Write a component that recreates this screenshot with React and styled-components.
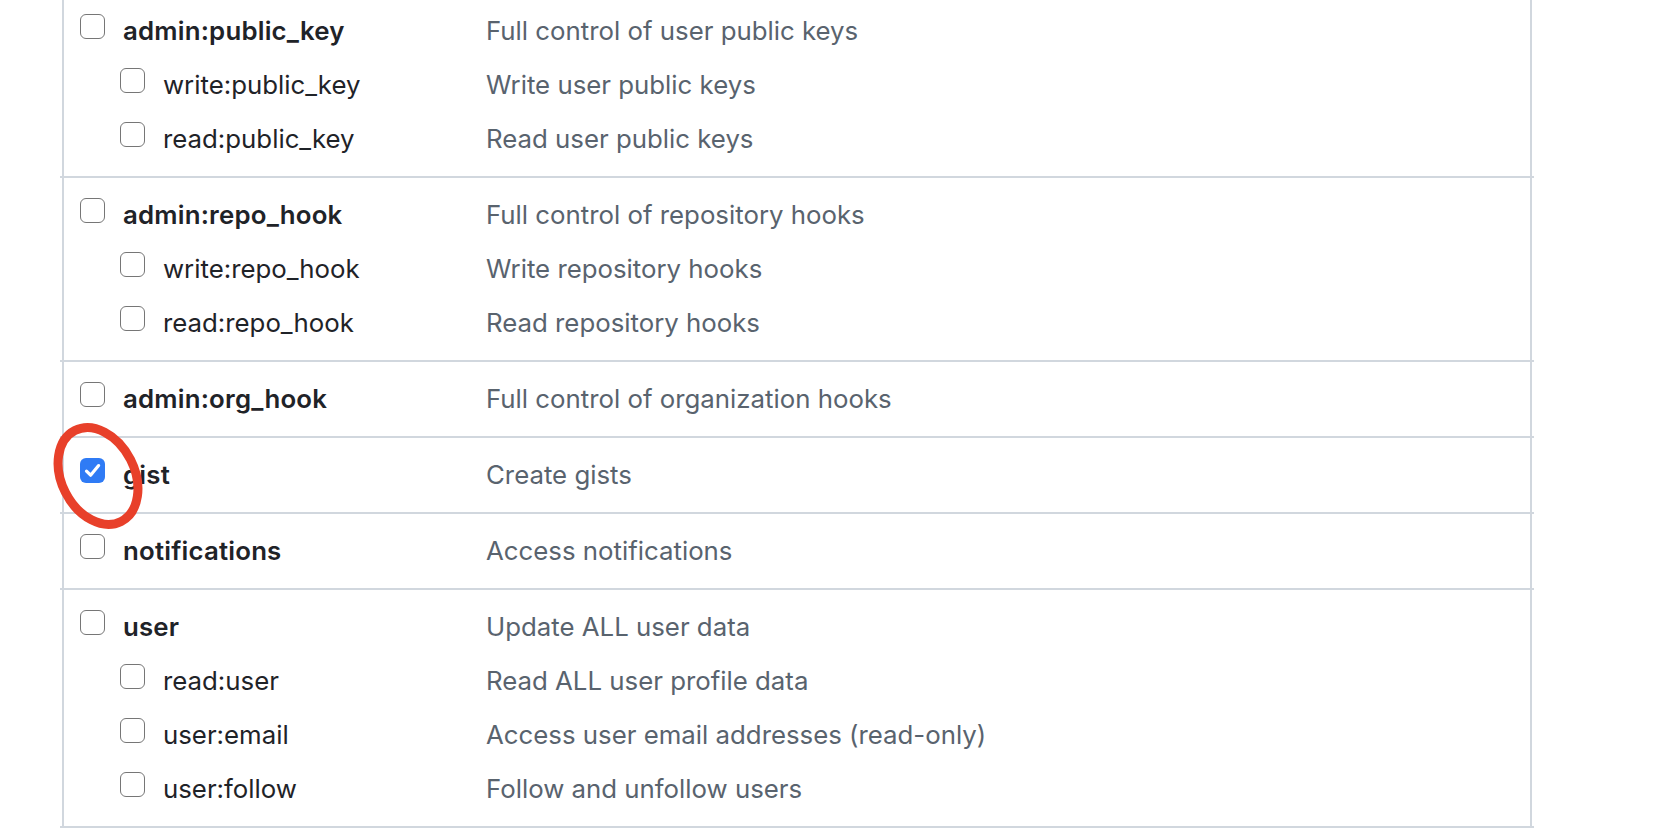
import React from "react";
import styled, { createGlobalStyle } from "styled-components";

const GlobalStyle = createGlobalStyle`
  html, body {
    margin: 0;
    padding: 0;
    background: #ffffff;
    overflow: hidden;
  }
  body {
    font-family: Inter, "Noto Sans", "Liberation Sans", sans-serif;
    -webkit-font-smoothing: antialiased;
  }
`;

const Page = styled.div`
  width: 1662px;
  height: 838px;
  overflow: hidden;
  background: #ffffff;
`;

const ScopeList = styled.div`
  margin: -6px 0 0 62px;
  width: 1470px;
  box-sizing: border-box;
  border-left: 2px solid #d1d7de;
  border-right: 2px solid #d1d7de;
`;

const Group = styled.div`
  padding: 10px 0;
`;

const Divider = styled.div`
  height: 2px;
  margin: 0 -4px;
  background: #d1d7de;
`;

const Row = styled.div`
  display: grid;
  grid-template-columns: 422px 1fr;
  height: 54px;
  font-size: 25.8px;
  line-height: 54px;
`;

const NameCell = styled.label`
  position: relative;
  display: flex;
  align-items: flex-start;
  gap: 18px;
  padding-left: ${(p) => (p.$sub ? "56px" : "16px")};
  color: #1f2328;
  font-weight: ${(p) => (p.$sub ? 400 : 600)};
  letter-spacing: ${(p) => (p.$sub ? "0" : "0.2px")};
  white-space: nowrap;
`;

const Desc = styled.div`
  color: #59636e;
  font-weight: 400;
  white-space: nowrap;
`;

const Box = styled.span`
  position: relative;
  flex: none;
  box-sizing: border-box;
  width: 25px;
  height: 25px;
  margin-top: 10px;
  border-radius: 6px;
  border: ${(p) => (p.$checked ? "none" : "1.8px solid #767676")};
  background: ${(p) => (p.$checked ? "#2f7bf5" : "#ffffff")};
  display: flex;
  align-items: center;
  justify-content: center;
`;

const Annotation = styled.svg`
  position: absolute;
  left: -14px;
  top: -24px;
  width: 110px;
  height: 130px;
  pointer-events: none;
  overflow: visible;
`;

function Checkbox({ checked }) {
  return (
    <Box $checked={checked}>
      {checked && (
        <svg width="25" height="25" viewBox="0 0 25 25">
          <path
            d="M6.5 13.2 L10.6 17.2 L18.6 7.6"
            fill="none"
            stroke="#ffffff"
            strokeWidth="3.2"
            strokeLinecap="round"
            strokeLinejoin="round"
          />
        </svg>
      )}
    </Box>
  );
}

const groups = [
  {
    name: "admin:public_key",
    desc: "Full control of user public keys",
    subs: [
      ["write:public_key", "Write user public keys"],
      ["read:public_key", "Read user public keys"],
    ],
  },
  {
    name: "admin:repo_hook",
    desc: "Full control of repository hooks",
    subs: [
      ["write:repo_hook", "Write repository hooks"],
      ["read:repo_hook", "Read repository hooks"],
    ],
  },
  { name: "admin:org_hook", desc: "Full control of organization hooks", subs: [] },
  { name: "gist", desc: "Create gists", subs: [], checked: true, circled: true },
  { name: "notifications", desc: "Access notifications", subs: [] },
  {
    name: "user",
    desc: "Update ALL user data",
    subs: [
      ["read:user", "Read ALL user profile data"],
      ["user:email", "Access user email addresses (read-only)"],
      ["user:follow", "Follow and unfollow users"],
    ],
  },
];

function Circle() {
  return (
    <Annotation viewBox="0 0 110 130">
      <ellipse
        cx="48"
        cy="52"
        rx="36.5"
        ry="51"
        transform="rotate(-27 48 52)"
        fill="none"
        stroke="#e8402a"
        strokeWidth="9"
      />
    </Annotation>
  );
}

export default function App() {
  return (
    <Page>
      <GlobalStyle />
      <ScopeList>
        {groups.map((g) => (
          <React.Fragment key={g.name}>
            <Group>
              <Row>
                <NameCell>
                  <Checkbox checked={g.checked} />
                  <span>{g.name}</span>
                  {g.circled && <Circle />}
                </NameCell>
                <Desc>{g.desc}</Desc>
              </Row>
              {g.subs.map(([n, d]) => (
                <Row key={n}>
                  <NameCell $sub>
                    <Checkbox />
                    <span>{n}</span>
                  </NameCell>
                  <Desc>{d}</Desc>
                </Row>
              ))}
            </Group>
            <Divider />
          </React.Fragment>
        ))}
      </ScopeList>
    </Page>
  );
}
